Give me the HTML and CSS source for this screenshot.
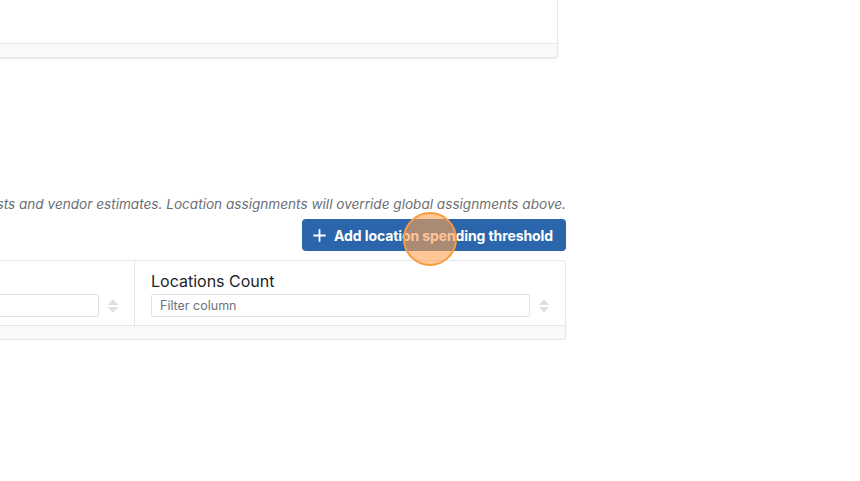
FILE: index.html
```html
<!DOCTYPE html>
<html lang="en">
<head>
  <meta charset="UTF-8">
  <meta name="viewport" content="width=device-width, initial-scale=1">
  <title>Spending Thresholds</title>
  <link rel="stylesheet" href="styles.css">
</head>
<body>
  <div class="page">
    <div class="card card-top">
      <div class="card-body"></div>
      <div class="card-footer"></div>
    </div>

    <section class="section">
      <p class="hint">Set spending thresholds for each location that apply to purchase requests and vendor estimates. Location assignments will override global assignments above.</p>
      <div class="actions">
        <button class="btn-primary" type="button">
          <svg width="13" height="13" viewBox="0 0 13 13"><path d="M6.5 1v11M1 6.5h11" stroke="#fff" stroke-width="1.8" stroke-linecap="round"/></svg>
          Add location spending threshold
        </button>
        <span class="cursor-dot"></span>
      </div>

      <div class="card table-card">
        <div class="table-head">
          <div class="th th-first">
            <div class="th-label">Location</div>
            <div class="th-filter">
              <input class="filter-input" type="text" placeholder="Filter column">
              <span class="sort-icon"></span>
            </div>
          </div>
          <div class="th th-last">
            <div class="th-label">Locations Count</div>
            <div class="th-filter">
              <input class="filter-input" type="text" placeholder="Filter column">
              <span class="sort-icon"></span>
            </div>
          </div>
        </div>
        <div class="card-footer"></div>
      </div>
    </section>
  </div>
</body>
</html>
```

FILE: styles.css
```css
body {
  margin: 0;
  background: #fff;
  font-family: Inter, 'Liberation Sans', Arial, sans-serif;
  color: #212529;
  overflow: hidden;
}

.page {
  width: 566px;
  display: flex;
  flex-direction: column;
}

.card {
  background: #fff;
  border: 1px solid #e3e6ea;
  border-radius: 4px;
  box-shadow: 0 1px 2px rgba(0,0,0,0.08);
  overflow: hidden;
}

.card-top {
  margin: -20px 8px 0 -20px;
  border-top: none;
}

.card-top .card-body {
  height: 63px;
  background: linear-gradient(#f6f6f7, #fff 14px);
}

.card-footer {
  height: 13px;
  background: #f8f9fa;
  border-top: 1px solid #e3e6ea;
}

.section {
  margin-top: 136px;
  display: flex;
  flex-direction: column;
}

.hint {
  margin: 0;
  display: flex;
  justify-content: flex-end;
  white-space: nowrap;
  font-size: 13.6px;
  font-style: italic;
  color: #6b6f75;
  line-height: 20px;
}

.actions {
  position: relative;
  display: flex;
  justify-content: flex-end;
  margin-top: 5px;
}

.btn-primary {
  display: flex;
  align-items: center;
  gap: 8px;
  height: 32px;
  padding: 0 13px 0 11px;
  background: #2b66ad;
  border: none;
  border-radius: 4px;
  color: #fff;
  font-family: Inter, 'Liberation Sans', Arial, sans-serif;
  font-size: 14px;
  font-weight: 700;
  letter-spacing: -0.1px;
}

.cursor-dot {
  position: absolute;
  left: 403px;
  top: -7px;
  width: 50px;
  height: 50px;
  border-radius: 50%;
  background: rgba(255, 160, 80, 0.6);
  border: 2px solid #f59c42;
}

.table-card {
  margin: 9px 0 0 -200px;
}

.table-head {
  display: flex;
}

.th {
  padding: 10px 16px 8px 16px;
  display: flex;
  flex-direction: column;
  gap: 3px;
}

.th-first {
  width: 317px;
  padding-left: 0;
  border-right: 1px solid #e3e6ea;
}

.th-first .th-label {
  visibility: hidden;
}

.th-last {
  flex: 1;
}

.th-label {
  font-size: 16px;
  line-height: 20px;
}

.th-filter {
  display: flex;
  align-items: center;
  gap: 9px;
}

.filter-input {
  flex: 1;
  min-width: 0;
  height: 23px;
  box-sizing: border-box;
  border: 1px solid #dfe2e6;
  border-radius: 2px;
  padding: 0 8px;
  font-family: Inter, 'Liberation Sans', Arial, sans-serif;
  font-size: 12.5px;
}

.filter-input::placeholder {
  color: #6c737c;
}

.sort-icon {
  width: 10px;
  height: 14px;
  background:
    linear-gradient(to bottom right, transparent 50%, #dde1e6 50%) left top / 5px 6px no-repeat,
    linear-gradient(to bottom left, transparent 50%, #dde1e6 50%) right top / 5px 6px no-repeat,
    linear-gradient(to top right, transparent 50%, #dde1e6 50%) left bottom / 5px 6px no-repeat,
    linear-gradient(to top left, transparent 50%, #dde1e6 50%) right bottom / 5px 6px no-repeat;
}
```
